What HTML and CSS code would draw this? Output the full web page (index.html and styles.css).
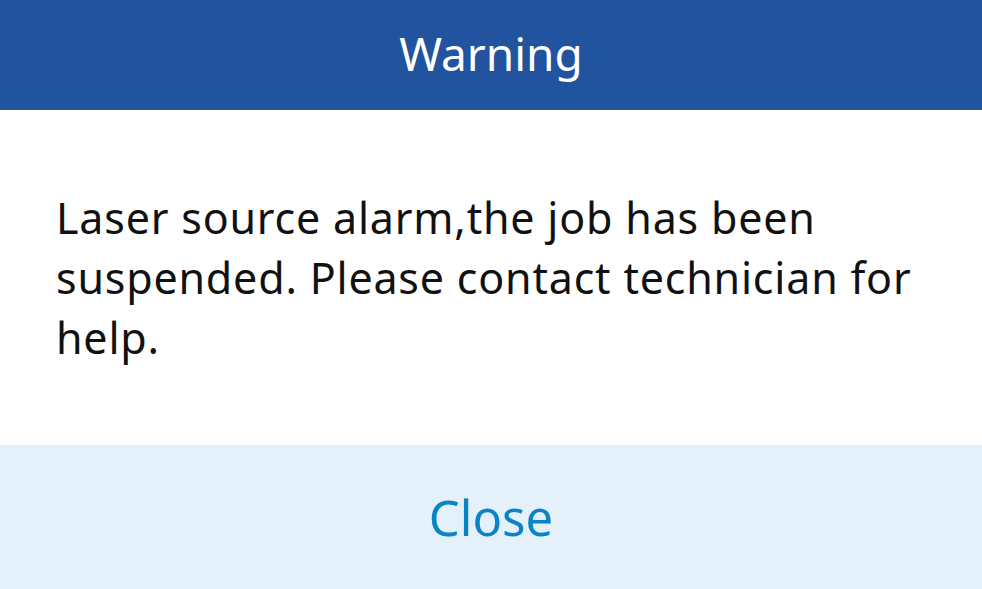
FILE: index.html
```html
<!DOCTYPE html>
<html>
<head>
<meta charset="utf-8">
<link rel="stylesheet" href="styles.css">
</head>
<body>
<div class="dialog">
  <div class="header">Warning</div>
  <div class="content">
    <p class="message">Laser source alarm,the job has been suspended. Please contact technician for help.</p>
  </div>
  <div class="footer">
    <span class="close-btn">Close</span>
  </div>
</div>
</body>
</html>
```
FILE: styles.css
```css
html, body {
  margin: 0;
  padding: 0;
  background: #ffffff;
}
body {
  font-family: "Noto Sans", "Open Sans", sans-serif;
}
.dialog {
  width: 982px;
  height: 589px;
  display: flex;
  flex-direction: column;
}
.header {
  height: 110px;
  background: #22539e;
  color: #ffffff;
  font-size: 46px;
  display: flex;
  align-items: center;
  justify-content: center;
  padding-bottom: 4px;
  box-sizing: border-box;
}
.content {
  height: 335px;
  display: flex;
  align-items: center;
  padding: 0 56px;
  box-sizing: border-box;
}
.message {
  margin: 0;
  font-size: 43px;
  letter-spacing: 0.8px;
  line-height: 60px;
  color: #111111;
}
.footer {
  flex: 1;
  background: #e5f1fa;
  display: flex;
  align-items: center;
  justify-content: center;
}
.close-btn {
  font-size: 49px;
  color: #0a84c6;
}
```
